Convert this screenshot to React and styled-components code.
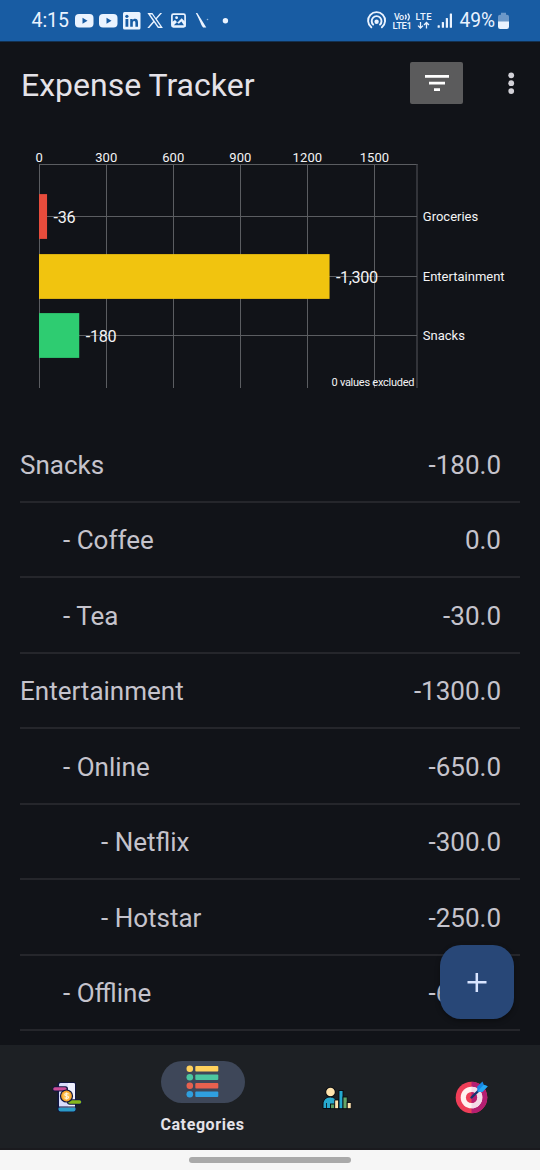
import React from 'react';
import styled, { createGlobalStyle } from 'styled-components';

const GlobalStyle = createGlobalStyle`
  * { box-sizing: border-box; }
  body { margin: 0; background: #111318; font-family: Roboto, "Liberation Sans", sans-serif; }
`;

const Screen = styled.div`
  width: 540px;
  height: 1170px;
  display: flex;
  flex-direction: column;
  overflow: hidden;
  position: relative;
  background: #111318;
`;

const StatusBar = styled.header`
  height: 42px;
  flex: none;
  display: flex;
  justify-content: space-between;
  background: #185ca3;
  border-bottom: 1px solid #13304f;
  color: #eaf3ff;
`;

const StatusIcons = styled.svg`
  display: block;
  flex: none;
  fill: #eaf3ff;
  font-family: Roboto, sans-serif;
`;

const AppBar = styled.div`
  height: 82px;
  flex: none;
  display: flex;
  align-items: center;
  padding: 0 18px 0 21px;
`;

const Title = styled.h1`
  margin: 4px auto 0 0;
  font-size: 32px;
  line-height: 40px;
  font-weight: 400;
  color: #e4e2e8;
`;

const FilterButton = styled.button`
  width: 53px;
  height: 42px;
  padding: 0;
  border: 0;
  border-radius: 2px;
  background: #5b5b5c;
  display: block;
`;

const MenuButton = styled.button`
  width: 22px;
  height: 42px;
  margin-left: 37px;
  padding: 0;
  border: 0;
  background: none;
`;

const ChartArea = styled.svg`
  display: block;
  flex: none;
  font-family: Roboto, sans-serif;
  fill: #f4f4f5;
`;

const List = styled.ul`
  margin: 0;
  padding: 0 20px;
  list-style: none;
  flex: none;
`;

const Row = styled.li`
  height: 75.5px;
  display: flex;
  align-items: center;
  justify-content: space-between;
  padding: 2px 19px 0 ${(p) => [0, 43, 81][p.$level]}px;
  border-bottom: 2px solid #25262b;
  font-size: 26px;
  line-height: 32px;
  color: #c5c3cc;
`;

const AddButton = styled.button`
  position: absolute;
  left: 440px;
  top: 945px;
  width: 74px;
  height: 74px;
  padding: 0;
  border: 0;
  border-radius: 21px;
  background: #284777;
  box-shadow: 0 2px 5px rgba(0, 0, 0, 0.35);
`;

const NavBar = styled.nav`
  height: 105px;
  margin-top: auto;
  flex: none;
  display: grid;
  grid-template-columns: repeat(4, 135px);
  background: #1d2024;
  border-bottom: 2px solid #1a1a1e;
`;

const NavItem = styled.div`
  display: flex;
  flex-direction: column;
  align-items: center;
  padding-top: ${(p) => p.$top}px;
  padding-right: ${(p) => p.$nudge || 0}px;
`;

const Pill = styled.div`
  width: 84px;
  height: 42px;
  border-radius: 21px;
  background: #3e4759;
  display: flex;
  align-items: center;
  justify-content: center;
`;

const NavLabel = styled.span`
  margin-top: 12px;
  font-size: 16px;
  line-height: 20px;
  font-weight: 700;
  letter-spacing: 0.6px;
  color: #e4e2e8;
`;

const GestureBar = styled.footer`
  height: 20px;
  flex: none;
  background: #f6f6f6;
  display: flex;
  align-items: center;
  justify-content: center;
`;

const Handle = styled.div`
  width: 162px;
  height: 6px;
  border-radius: 3px;
  background: #a9a9a9;
`;

const rows = [
  ['Snacks', '-180.0', 0],
  ['- Coffee', '0.0', 1],
  ['- Tea', '-30.0', 1],
  ['Entertainment', '-1300.0', 0],
  ['- Online', '-650.0', 1],
  ['- Netflix', '-300.0', 2],
  ['- Hotstar', '-250.0', 2],
  ['- Offline', '-650.0', 1],
];

const bars = [
  { name: 'Groceries', value: 36, label: '-36', color: '#e74c3c', y: 216.5, width: 22 },
  { name: 'Entertainment', value: 1300, label: '-1,300', color: '#f1c40f', y: 276.5, width: 42 },
  { name: 'Snacks', value: 180, label: '-180', color: '#2ecc71', y: 335.5, width: 31 },
];
const scaleX = (v) => 39.2 + v * 0.2235;

function StatusLeft() {
  return (
    <StatusIcons width="250" height="41" viewBox="0 0 250 41">
      <text x="31.5" y="27" fontSize="19.5" textLength="37.5">4:15</text>
      {[75, 99].map((x) => (
        <g key={x}>
          <rect x={x} y="14" width="18.5" height="13.5" rx="4" />
          <path d={`M${x + 7.5} 17.800v6l5-3z`} fill="#185ca3" />
        </g>
      ))}
      <rect x="123" y="12" width="17.500" height="17.500" rx="1.500" />
      <g fill="#185ca3">
        <circle cx="126.900" cy="16.300" r="1.600" />
        <path d="M125.500 19h2.800v7.800h-2.800zM130.200 19h2.500v1.200c.5-.9 1.300-1.400 2.400-1.400 2.200 0 2.900 1.400 2.900 3.700v4.300h-2.600v-3.900c0-1.200-.2-2-1.200-2s-1.400.8-1.400 2v3.900h-2.600z" />
      </g>
      <path fillRule="evenodd" d="M147.400 13h5l3.500 4.900 4.300-4.900h1.900l-5.300 6.100 6.100 8.900h-5l-3.900-5.600-4.800 5.600h-1.900l5.800-6.800zm2.800 1.500 8.400 12h1.800l-8.400-12z" />
      <rect x="171.900" y="14.200" width="13.200" height="12.600" rx="1.500" fill="none" stroke="#eaf3ff" strokeWidth="1.700" />
      <path d="M172 26v-4l3-2 2.500 2.500 4.200-4.200 3.800 4V27h-13.500z" />
      <path d="m173.800 25.200 3-3 2 1.600 2.600-2.200 2.500 3.600z" fill="#185ca3" />
      <circle cx="176.600" cy="17.700" r="1.400" />
      <path d="M195.800 13h1.500l9 14.500h-3.200c-2-2.300-2.700-6-7.300-14.500z" />
      <circle cx="207.500" cy="19.500" r="0.800" opacity="0.600" />
      <circle cx="225.400" cy="20.700" r="2.700" />
    </StatusIcons>
  );
}

function StatusRight() {
  return (
    <StatusIcons width="180" height="41" viewBox="360 0 180 41">
      <g fill="none" stroke="#eaf3ff" strokeWidth="1.900" strokeLinecap="round">
        <path d="M371.300 27.300a8.500 8.500 0 1 1 10.600 0" />
        <path d="M373.200 24.600a4.900 4.900 0 1 1 6.800 0" />
      </g>
      <circle cx="376.600" cy="21.800" r="2.200" />
      <g fontWeight="500">
        <text x="394" y="19.800" fontSize="9" textLength="10">Vo</text>
        <text x="392.500" y="28.700" fontSize="9.500" textLength="19.500">LTE1</text>
        <text x="415.500" y="20" fontSize="9.500" textLength="16">LTE</text>
      </g>
      <g fill="none" stroke="#eaf3ff" strokeWidth="1.300">
        <path d="M405.200 14.800q2 2.200 0 4.600M407.700 13.500q3.200 3.500 0 7" />
        <path d="M420.500 22v6M418 25.600l2.500 2.500 2.500-2.500M426.500 28.500v-6M424 25l2.500-2.500 2.500 2.500" />
      </g>
      <rect x="437.600" y="25.200" width="2.200" height="2.600" rx=".5" />
      <rect x="441.800" y="22" width="2.200" height="5.800" rx=".5" />
      <rect x="445.800" y="18" width="2.200" height="9.800" rx=".5" />
      <rect x="449.800" y="13.500" width="2.200" height="14.300" rx=".5" />
      <text x="459.500" y="27" fontSize="19.500" textLength="35.500" lengthAdjust="spacingAndGlyphs">49%</text>
      <path d="M501 12.800h5v2h1a2 2 0 0 1 2 2V22h-11v-5.200a2 2 0 0 1 2-2h1z" opacity=".4" />
      <path d="M498 21.500h11v5.300a2.200 2.200 0 0 1-2.200 2.200h-6.600a2.200 2.200 0 0 1-2.200-2.200z" />
    </StatusIcons>
  );
}

function Chart() {
  return (
    <ChartArea width="540" height="303" viewBox="0 124 540 303">
      <g stroke="#5b5d61" strokeWidth="1">
        <path d="M39 164.500H417.500" />
        {[0, 300, 600, 900, 1200, 1500].map((v) => (
          <path key={v} d={`M${Math.floor(scaleX(v)) + 0.5} 164V388`} />
        ))}
        <path d="M417 164V388" strokeWidth="1.300" stroke="#46484d" />
        {bars.map((b) => <path key={b.name} d={`M39 ${b.y}H417`} />)}
      </g>
      {[0, 300, 600, 900, 1200, 1500].map((v) => (
        <text key={v} x={scaleX(v)} y="161.500" fontSize="13" letterSpacing="0.100" textAnchor="middle">{v}</text>
      ))}
      {bars.map((b) => (
        <g key={b.name}>
          <rect x="39" y={b.y - 22.4} width={b.value * 0.2235} height="44.800" fill={b.color} />
          <text x={scaleX(b.value) + 6.3} y={b.y + 6.5} fontSize="16.200" textLength={b.width}>{b.label}</text>
          <text x="422.800" y={b.y + 4.5} fontSize="13">{b.name}</text>
        </g>
      ))}
      <text x="331.500" y="385.700" fontSize="11" textLength="83">0 values excluded</text>
    </ChartArea>
  );
}

function PaymentIcon() {
  return (
    <svg width="32" height="32" viewBox="0 0 32 32">
      <rect x="7.500" y="1" width="18.500" height="30" rx="2.500" fill="#101540" />
      <rect x="9" y="2" width="16" height="25" rx="1.500" fill="#d9dcfb" />
      <path d="M18 2h5.500A1.500 1.500 0 0 1 25 3.500V27h-7z" fill="#eff0ff" />
      <path d="M8.500 26.500h17V28.500a2 2 0 0 1-2 2h-13a2 2 0 0 1-2-2z" fill="#2c9bc6" />
      <path d="M8 26h18" stroke="#101540" strokeWidth="1" />
      <rect x="2.500" y="5.200" width="15.500" height="5.400" rx="2.700" fill="#101540" />
      <rect x="3.200" y="6.200" width="13.500" height="3.400" rx="1.700" fill="#cc4c98" />
      <rect x="17" y="18.300" width="15" height="5.400" rx="2.700" fill="#101540" />
      <rect x="18" y="19.300" width="13.300" height="3.400" rx="1.700" fill="#86b71e" />
      <circle cx="16.500" cy="15" r="6.600" fill="#101540" />
      <circle cx="16.500" cy="15" r="5.400" fill="#f5a32d" />
      <circle cx="16.500" cy="15" r="3.900" fill="#ffbd4a" />
      <path d="M18.500 13.100c-1-.9-3.700-.9-3.700.6 0 1.700 3.700.8 3.700 2.600 0 1.500-2.800 1.500-3.900.4M16.500 11.500v7" fill="none" stroke="#fff4dc" strokeWidth="1.200" />
    </svg>
  );
}

function CategoriesIcon() {
  return (
    <svg width="34" height="34" viewBox="0.700 0.500 34 34">
      {['#ffd15d', '#4bc6a0', '#e7614f', '#2f9fdf'].map((color, i) => (
        <g key={color} fill={color}>
          <circle cx="4.500" cy={4.2 + i * 8.5} r="3.300" />
          <rect x="10" y={1.5 + i * 8.5} width="23" height="5.400" rx="0.900" />
        </g>
      ))}
    </svg>
  );
}

function StatsIcon() {
  return (
    <svg width="30" height="26" viewBox="0 0 30 26">
      <circle cx="8.500" cy="6" r="5.200" fill="#080b10" />
      <circle cx="8.500" cy="6" r="4.300" fill="#ffe4ae" />
      <path d="M1 22.500V18c0-4.300 3.200-7 7.300-7 3 0 5.500 1.600 6.200 4v7.500z" fill="#27a9ce" stroke="#080b10" />
      <path d="M4.500 17v5" stroke="#080b10" strokeWidth=".8" />
      <g stroke="#080b10" strokeWidth=".9">
        <rect x="8.500" y="18" width="4.200" height="4.700" fill="#5a9e65" />
        <rect x="12.700" y="14" width="4" height="8.700" fill="#ffe4ae" />
        <rect x="17" y="4.500" width="4" height="18.200" fill="#23a9d1" />
        <rect x="21" y="11" width="4.200" height="11.700" fill="#65a668" />
        <rect x="25.200" y="16.500" width="4" height="6.200" fill="#ffe4ae" />
      </g>
    </svg>
  );
}

function TargetIcon() {
  return (
    <svg width="34" height="34" viewBox="0 0 34 34">
      <circle cx="16.500" cy="17.500" r="15.800" fill="#ee3e58" />
      <path d="M16.500 1.700a15.800 15.800 0 0 1 0 31.600z" fill="#b51e72" />
      <circle cx="16.500" cy="17.500" r="10.800" fill="#fff1f1" />
      <path d="M16.500 6.700a10.800 10.800 0 0 1 0 21.600z" fill="#f3d9e8" />
      <circle cx="16.500" cy="17.500" r="5.600" fill="#ee3e58" />
      <path d="M16.500 11.900a5.600 5.600 0 0 1 0 11.200z" fill="#b51e72" />
      <path d="m16.500 17.500 9-8.700" stroke="#17336f" strokeWidth="2.400" strokeLinecap="round" />
      <path d="m22.500 11.500-.4-4.800L27.500 1.500l1.300 3.200 3.900 1.500-5.400 5.700z" fill="#1687e5" />
      <path d="m22.500 11.500 6.300-6.800 3.900 1.500-5.400 5.700z" fill="#25a7f3" />
    </svg>
  );
}

export default function App() {
  return (
    <Screen>
      <GlobalStyle />
      <StatusBar>
        <StatusLeft />
        <StatusRight />
      </StatusBar>
      <AppBar>
        <Title>Expense Tracker</Title>
        <FilterButton aria-label="Filter">
          <svg width="53" height="42" viewBox="0 0 53 42" fill="#fff">
            <path d="M15 13H39v2.800H15zM19 19.700h16v2.800h-16zM24 26.300h6v2.700h-6z" />
          </svg>
        </FilterButton>
        <MenuButton aria-label="More options">
          <svg width="22" height="42" viewBox="0 0 22 42" fill="#d2d1d7">
            <circle cx="11.200" cy="13.300" r="2.900" />
            <circle cx="11.200" cy="21.200" r="2.900" />
            <circle cx="11.200" cy="29.100" r="2.900" />
          </svg>
        </MenuButton>
      </AppBar>
      <Chart />
      <List>
        {rows.map(([name, amount, level]) => (
          <Row key={name} $level={level}>
            <span>{name}</span>
            <span>{amount}</span>
          </Row>
        ))}
      </List>
      <NavBar>
        <NavItem $top={36} $nudge={4}><PaymentIcon /></NavItem>
        <NavItem $top={16}>
          <Pill><CategoriesIcon /></Pill>
          <NavLabel>Categories</NavLabel>
        </NavItem>
        <NavItem $top={41} $nudge={2}><StatsIcon /></NavItem>
        <NavItem $top={35} $nudge={1}><TargetIcon /></NavItem>
      </NavBar>
      <GestureBar><Handle /></GestureBar>
      <AddButton aria-label="Add">
        <svg width="74" height="74" viewBox="0 0 74 74">
          <path d="M27.500 37.300h19M36.800 28v19" stroke="#d9e5ff" strokeWidth="2.500" />
        </svg>
      </AddButton>
    </Screen>
  );
}
